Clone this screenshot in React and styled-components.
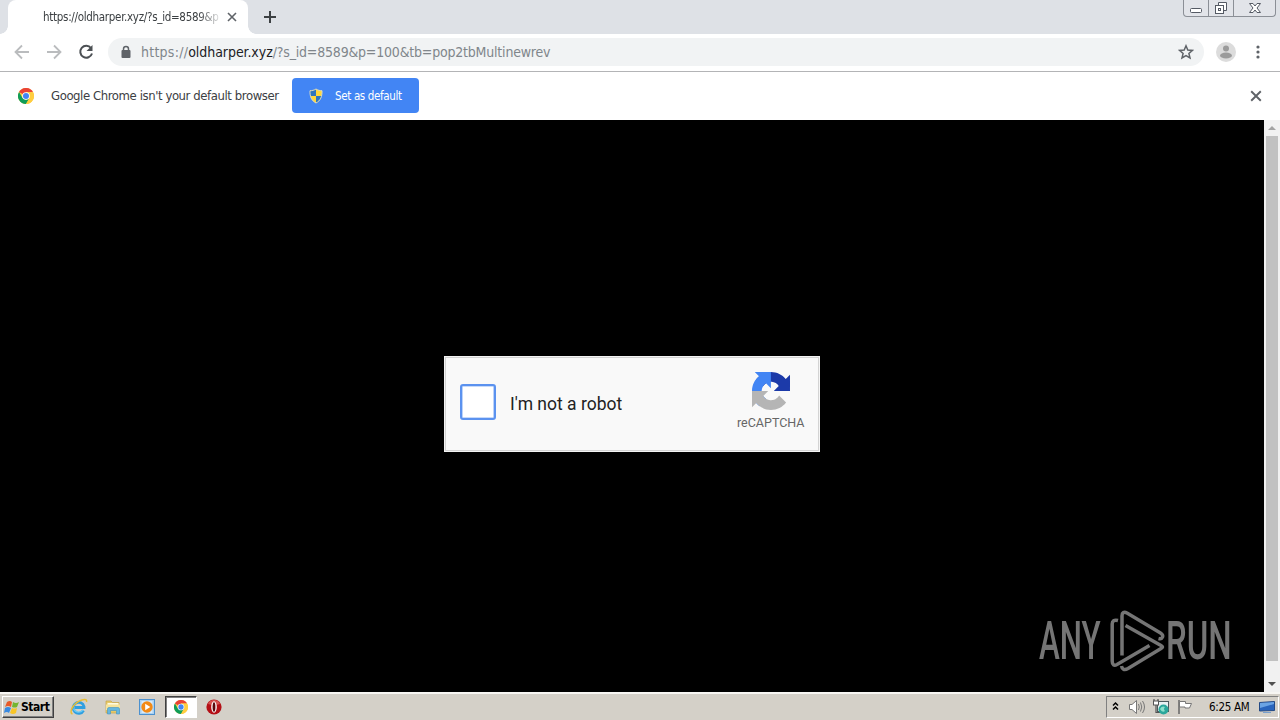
import React from 'react';
import styled, { createGlobalStyle } from 'styled-components';

const Global = createGlobalStyle`
  * { box-sizing: border-box; }
  body { margin: 0; background: #000; overflow: hidden; }
  svg { display: block; flex: none; }
`;
const ui = `"DejaVu Sans Condensed", "DejaVu Sans", Tahoma, sans-serif`;

const Screen = styled.div`
  width: 1280px; height: 720px; display: flex; flex-direction: column;
  font-family: ${ui}; background: #000; overflow: hidden;
`;
const TabStrip = styled.header`
  height: 34px; background: #dee1e6; display: flex; padding-left: 8px; flex: none;
`;
const Tab = styled.div`
  position: relative; width: 240px; height: 34px; background: #fff;
  border-radius: 8px 8px 0 0; display: flex; align-items: center; padding: 0 10px 0 35px;
  &::before, &::after {
    content: ''; position: absolute; bottom: 0; width: 8px; height: 8px;
  }
  &::before { left: -8px; background: radial-gradient(circle at 0 0, #dee1e6 7.5px, #fff 8px); }
  &::after { right: -8px; background: radial-gradient(circle at 100% 0, #dee1e6 7.5px, #fff 8px); }
`;
const Fade = styled.div`
  width: 184px; flex: none;
  mask-image: linear-gradient(90deg, #000 155px, transparent 180px);
`;
const Label = styled.span`
  display: block; white-space: pre; flex: none;
  font-size: ${p => p.$size}px; letter-spacing: ${p => p.$track || 0}px;
  color: ${p => p.$color || '#3c4043'}; line-height: 18px;
`;
const NewTab = styled.div`
  padding: 11px 0 0 16px;
`;
const WindowButtons = styled.div`
  margin-left: auto; margin-right: 4px; height: 17px; width: 93px; display: flex;
  border: 1px solid #8b8f96; border-top: 0; border-radius: 0 0 4px 4px; background: #e2e4e9;
`;
const WindowButton = styled.div`
  width: ${p => p.$w}px; display: flex; justify-content: center; padding-top: 1px;
  border-left: ${p => (p.$first ? '0' : '1px solid #8b8f96')};
`;
const Toolbar = styled.div`
  height: 38px; background: #fff; border-bottom: 1px solid #b3b4b6; flex: none;
  display: flex; align-items: center; padding: 0 13px 2px 14px;
`;
const NavIcons = styled.div`
  display: flex; gap: 16px; width: 94px;
`;
const Omnibox = styled.div`
  width: 1096px; height: 28px; border-radius: 14px; background: #f1f3f4;
  display: flex; align-items: center; padding: 0 10px 0 12px;
`;
const Scheme = styled.span`letter-spacing: .25px;`;
const Host = styled.span`color: #202124; letter-spacing: -.05px;`;
const UrlText = styled(Label)`margin-left: 9px; flex: 1;`;
const ToolbarEnd = styled.div`
  display: flex; align-items: center; gap: 14px; margin-left: 12px;
`;
const InfoBar = styled.div`
  height: 48px; background: #fff; display: flex; align-items: center; flex: none;
  padding: 0 18px 1px 18px;
`;
const InfoText = styled(Label)`width: 241px; margin-left: 17px;`;
const DefaultButton = styled.div`
  width: 127px; height: 35px; background: #4285f4; border-radius: 4px;
  display: flex; align-items: center; padding-left: 17px; gap: 12px; margin-right: auto;
`;
const Viewport = styled.main`
  height: 572px; flex: none; display: flex; background: #000;
`;
const Page = styled.div`
  position: relative; width: 1264px; display: flex; align-items: flex-start; justify-content: center;
  padding-top: 236px;
`;
const Captcha = styled.section`
  width: 376px; height: 96px; background: #f9f9f9; border: 1px solid #f4f4f4;
  box-shadow: inset 0 0 0 1px #d3d3d3; display: flex; align-items: center;
  font-family: Roboto, sans-serif; padding: 0 14.5px 0 15px;
`;
const Check = styled.div`
  width: 36px; height: 36px; border: 2px solid #5b92ef; border-radius: 3px; background: #fff;
  box-shadow: inset 0 0 0 .6px #8fb5f5; margin: -4px 14px 0 0; flex: none;
`;
const Brand = styled.div`
  margin-left: auto; display: flex; flex-direction: column; align-items: center; gap: 4px; margin-top: -5px;
`;
const Watermark = styled.div`
  position: absolute; right: 32px; top: 488px; display: flex; align-items: center; color: #757575;
`;
const Word = styled.div`
  width: ${p => p.$w}px; height: 64px;
  & > span {
    display: block; width: max-content; font: 500 54px/66px Roboto, sans-serif;
    transform: scaleX(${p => p.$scale}); transform-origin: 0 0;
  }
`;
const ScrollBar = styled.div`
  width: 16px; background: #f1f1f1; display: flex; flex-direction: column; align-items: center;
`;
const ScrollArrow = styled.div`
  height: 16px; display: flex; align-items: center;
`;
const Thumb = styled.div`
  width: 12px; height: 525px; background: #c1c1c1; margin-bottom: auto;
`;
const Taskbar = styled.footer`
  height: 28px; flex: none; background: #d4d0c8; box-shadow: inset 0 2px #f7f6f3;
  display: flex; align-items: center; padding: 2px 0 0 2px;
`;
const Start = styled.div`
  width: 52px; height: 22px; display: flex; align-items: center; gap: 1px; padding-left: 1px;
  border: 1px solid; border-color: #fff #404040 #404040 #fff; box-shadow: inset -1px -1px #808080;
  font-weight: bold;
`;
const Quick = styled.div`
  display: flex; align-items: center; margin-left: 8px;
`;
const QuickItem = styled.div`
  width: ${p => (p.$active ? 32 : 34)}px; height: 22px; display: flex; align-items: center; justify-content: center;
  ${p => p.$active && `background: #fff; margin: 0 0 0 1px; border: 1px solid; border-color: #404040 #fff #fff #404040; box-shadow: inset 1px 1px #808080;`}
`;
const Tray = styled.div`
  width: 173px; height: 22px; margin-left: auto; margin-right: 1px; display: flex; align-items: center;
  border: 1px solid; border-color: #808080 #fff #fff #808080; padding-left: 4px;
`;
const TrayIcons = styled.div`
  display: flex; align-items: center; gap: 7.5px; width: 98px;
`;
const Clock = styled(Label)`width: 50px;`;

const Cross = ({ size, color = '#5f6368', w = 1.6 }) => (
  <svg width={size} height={size} viewBox="0 0 10 10"><path d="M1 1L9 9M9 1L1 9" stroke={color} strokeWidth={w} /></svg>
);
const Chrome = ({ size }) => (
  <svg width={size} height={size} viewBox="2 2 44 44">
    <circle cx="24" cy="24" r="22" fill="#ffcd40" />
    <path d="M24 24L4.9 13A22 22 0 0 1 43.1 13H24Z" fill="#ea4335" />
    <path d="M4.9 13A22 22 0 0 0 24 46L33.5 29.5 24 34 14.5 29.5Z" fill="#0f9d58" />
    <path d="M43.1 13H24L33.5 29.5 24 46A22 22 0 0 0 43.1 13Z" fill="#ffcd40" />
    <circle cx="24" cy="24" r="10.5" fill="#fff" /><circle cx="24" cy="24" r="8.3" fill="#4285f4" />
  </svg>
);
const Shield = () => (
  <svg width="14" height="16" viewBox="0 0 14 16">
    <path d="M7 1C9 2.3 11 2.7 13 2.7C13.3 8.5 11.5 12.7 7 15C2.5 12.7.7 8.5 1 2.7C3 2.7 5 2.3 7 1Z" fill="#ffd83b" />
    <path d="M7 1C5 2.3 3 2.7 1 2.7C.9 5 1.1 6.5 1.5 8H7ZM7 8H12.5C11.7 11 10 13.4 7 15Z" fill="#2f76bd" />
    <path d="M7 1C9 2.3 11 2.7 13 2.7C13.3 8.5 11.5 12.7 7 15C2.5 12.7.7 8.5 1 2.7C3 2.7 5 2.3 7 1Z" fill="none" stroke="#d9dbc5" />
  </svg>
);
const Recaptcha = () => (
  <svg width="38" height="38" viewBox="0 0 64 64">
    <path fill="#1c3aa9" d="M64 31.955l-.033-1.37V4.687l-7.16 7.16C50.948 4.674 42.033.093 32.05.093c-10.4 0-19.622 4.96-25.458 12.64l11.736 11.86a15.55 15.55 0 0 1 4.754-5.334c2.05-1.6 4.952-2.906 8.968-2.906.485 0 .86.057 1.135.163 4.976.393 9.288 3.14 11.828 7.124l-8.307 8.307L64 31.953" />
    <path fill="#4285f4" d="M31.862.094l-1.37.033H4.594l7.16 7.16C4.58 13.147 0 22.06 0 32.046c0 10.4 4.96 19.622 12.64 25.458L24.5 45.768a15.55 15.55 0 0 1-5.334-4.754c-1.6-2.05-2.906-4.952-2.906-8.968 0-.485.057-.86.163-1.135.393-4.976 3.14-9.288 7.124-11.828l8.307 8.307L31.86.095" />
    <path fill="#b5b5b5" d="M.001 32.045l.033 1.37v25.898l7.16-7.16c5.86 7.173 14.774 11.754 24.76 11.754 10.4 0 19.622-4.96 25.458-12.64l-11.736-11.86a15.55 15.55 0 0 1-4.754 5.334c-2.05 1.6-4.952 2.906-8.968 2.906-.485 0-.86-.057-1.135-.163-4.976-.393-9.288-3.14-11.828-7.124l8.307-8.307c-10.522.04-22.4.066-27.295-.005" />
  </svg>
);
const PlayMark = () => (
  <svg width="56" height="64" viewBox="80 3 56 64" fill="none" stroke="#757575" strokeWidth="3.5">
    <path d="M88 15.5C84 14.5 82.2 16 82.2 19V56C82.2 60 84 61 87 59.5L119.5 40.5" />
    <path d="M92 50.5V11C92 7.5 94 6.5 97 8L130.5 28C134.5 30.5 132.5 34.5 128.5 33.5" />
    <path d="M95.5 20.5L131 40.5C133 41.7 133 42.3 131 43.5L98 63.5C94.5 65.5 92 64.5 91.5 61" />
  </svg>
);
const WindowsFlag = () => (
  <svg width="16" height="16">
    <path d="M3 3Q6 1 8 3L7 8Q4 6 1 8Z" fill="#e85a28" /><path d="M9 3Q12 5 15 3L13 8Q11 9 8 8Z" fill="#75b52f" />
    <path d="M1 9Q4 7 7 9L5 14Q3 12 0 14Z" fill="#398ae1" /><path d="M8 9Q10 10 13 9L12 14Q9 16 6 14Z" fill="#f8c526" />
  </svg>
);
const Explorer = () => (
  <svg width="18" height="18" viewBox="0 0 18 18" fill="none">
    <path d="M13.5 12.5A5.5 5.5 0 1 1 14 8.5V9.5H5" stroke="#2f9fe0" strokeWidth="2.8" />
    <path d="M13 12A5.5 5.5 0 0 1 3.5 10.5" stroke="#68c9f5" strokeWidth="1.3" />
    <path d="M2.5 16C-1 15 2 7 9 3.2C13 .8 17.5.5 16.5 4" stroke="#e9bd35" strokeWidth="1.5" />
  </svg>
);
const Folder = () => (
  <svg width="18" height="18" viewBox="0 0 18 18">
    <path d="M2 3H7L8.5 4.5H15V15H2Z" fill="#e7c969" stroke="#c5a44b" strokeWidth=".7" />
    <path d="M3.5 5H14.5V8H3.5Z" fill="#fffbe0" /><path d="M2 6.5H16V12H2Z" fill="#f6e39b" />
    <path d="M3.5 16V11Q3.5 9.5 5 9.5H14Q15.5 9.5 15.5 11V16H12.5V12.5H6.5V16Z" fill="#65b6df" stroke="#3f93c2" strokeWidth=".6" />
  </svg>
);
const Player = () => (
  <svg width="16" height="16" viewBox="0 0 16 16">
    <rect x=".5" y=".5" width="15" height="15" fill="#a9d1f1" stroke="#4c91cf" />
    <rect x="2.5" y="2" width="11" height="12" fill="#d7eafa" />
    <circle cx="8" cy="8" r="5.7" fill="#f28a16" /><path d="M6.2 4.7L11.3 8L6.2 11.3Z" fill="#fff" />
  </svg>
);
const Opera = () => (
  <svg width="16" height="16" viewBox="0 0 16 16">
    <circle cx="8" cy="8" r="7.6" fill="#b40f16" /><path d="M2 5A6.5 6.5 0 0 1 14 5Q8 7 2 5Z" fill="#d65250" />
    <ellipse cx="8" cy="8" rx="2.8" ry="5.8" fill="#fff" /><ellipse cx="8" cy="8" rx="1.4" ry="4.8" fill="#5c080c" />
  </svg>
);
const Chevrons = () => (
  <svg width="9" height="12" fill="none" stroke="#000" strokeWidth="1.5"><path d="M2 4.5L4.5 2L7 4.5M2 8.5L4.5 6L7 8.5" /></svg>
);
const Speaker = () => (
  <svg width="18" height="16" fill="none" stroke="#777">
    <path d="M1.5 5.5H4L8.5 1.5V14.5L4 10.5H1.5Z" fill="#fff" /><path d="M10.5 5Q12 8 10.5 11M12.5 3.5Q15 8 12.5 12.5M14.5 2Q18.5 8 14.5 14" />
  </svg>
);
const Network = () => (
  <svg width="16" height="16">
    <rect x="4.5" y="2.5" width="11" height="10" fill="#e9f1f2" stroke="#4e5a5d" />
    <path d="M1 0V3M5 0V3M3 5V13.5H8" fill="none" stroke="#555" strokeWidth="1.2" />
    <rect x=".5" y="2" width="5" height="4" fill="#fff" stroke="#555" />
    <circle cx="10.5" cy="10.5" r="5" fill="#2aa79b" /><path d="M7 10Q9 6.5 12 8Q10 10 12 12Q9 14 7 10Z" fill="#8de0cb" />
  </svg>
);
const TrayFlag = () => (
  <svg width="16" height="16"><path d="M2 1V15" stroke="#666" strokeWidth="1.5" /><path d="M2.5 2.5H8.5V4.5H14.5L12.5 9H8V8H2.5Z" fill="#fff" stroke="#777" /></svg>
);
const Desktop = () => (
  <svg width="16" height="14"><path d="M.5 2.5L15.5 1.5V10.5L.5 11Z" fill="#2965bd" stroke="#244a85" /><path d="M1 3L15 2V4L1 8Z" fill="#6ba4e4" /><path d="M4 12H12V13H4Z" fill="#79a0cd" /></svg>
);

export default function App() {
  return (
    <Screen>
      <Global />
      <TabStrip>
        <Tab>
          <Fade><Label $size={11.5} $track={-0.3}>https://oldharper.xyz/?s_id=8589&amp;p</Label></Fade>
          <Cross size={10} />
        </Tab>
        <NewTab><svg width="12" height="12"><path d="M6 0V12M0 6H12" stroke="#3c4043" strokeWidth="2" /></svg></NewTab>
        <WindowButtons>
          <WindowButton $w={24} $first><svg width="14" height="14"><rect x="1.5" y="7.5" width="11" height="4" rx="1" fill="#fff" stroke="#555a64" /></svg></WindowButton>
          <WindowButton $w={25}><svg width="14" height="14" fill="#fff" stroke="#555a64"><path d="M4.5 1.5H12.5V9.5H9.5V4.5H4.5Z" /><rect x="1.5" y="4.5" width="8" height="8" /><rect x="4.5" y="7.5" width="2" height="2" /></svg></WindowButton>
          <WindowButton $w={42}><svg width="14" height="14"><path d="M1.5 2.5H5L7 5L9 2.5H12.5L9 7L12.5 11.5H9L7 9L5 11.5H1.5L5 7Z" fill="#fff" stroke="#555a64" /></svg></WindowButton>
        </WindowButtons>
      </TabStrip>
      <Toolbar>
        <NavIcons>
          <svg width="16" height="16" fill="none" stroke="#babcbe" strokeWidth="1.8"><path d="M15 8H2M8 1.5L1.5 8L8 14.5" /></svg>
          <svg width="16" height="16" fill="none" stroke="#babcbe" strokeWidth="1.8"><path d="M1 8H14M8 1.5L14.5 8L8 14.5" /></svg>
          <svg width="16" height="16" fill="none" stroke="#4c5054" strokeWidth="2"><path d="M13 4A6 6 0 1 0 14 9.5" /><path d="M14.5 1V7H8.5Z" fill="#4c5054" stroke="none" /></svg>
        </NavIcons>
        <Omnibox>
          <svg width="12" height="14"><path d="M3.5 6V4A2.5 2.5 0 0 1 8.5 4V6" fill="none" stroke="#5f6368" strokeWidth="1.5" /><rect x="1.5" y="5" width="9" height="8" rx="1" fill="#5f6368" /></svg>
          <UrlText $size={14} $track={-0.2} $color="#80868b"><Scheme>https://</Scheme><Host>oldharper.xyz</Host>/?s_id=8589&amp;p=100&amp;tb=pop2tbMultinewrev</UrlText>
          <svg width="16" height="16"><path d="M8 1.8L9.8 6L14.3 6.4L10.9 9.4L12 13.9L8 11.5L4 13.9L5.1 9.4L1.7 6.4L6.2 6Z" fill="none" stroke="#5f6368" strokeWidth="1.5" /></svg>
        </Omnibox>
        <ToolbarEnd>
          <svg width="20" height="20"><circle cx="10" cy="10" r="10" fill="#dcdcdc" /><circle cx="10" cy="6.5" r="3" fill="#9b9b9b" /><ellipse cx="10" cy="13.5" rx="6" ry="3" fill="#9b9b9b" /></svg>
          <svg width="16" height="16" fill="#5f6368"><circle cx="8" cy="3" r="1.6" /><circle cx="8" cy="8" r="1.6" /><circle cx="8" cy="13" r="1.6" /></svg>
        </ToolbarEnd>
      </Toolbar>
      <InfoBar>
        <Chrome size={16} />
        <InfoText $size={13} $track={-0.42}>Google Chrome isn't your default browser</InfoText>
        <DefaultButton><Shield /><Label $size={11.5} $track={-0.35} $color="#fff">Set as default</Label></DefaultButton>
        <Cross size={12} />
      </InfoBar>
      <Viewport>
        <Page>
          <Captcha>
            <Check />
            <Label $size={17.5} $color="#222">I'm not a robot</Label>
            <Brand><Recaptcha /><Label $size={12.5} $color="#666">reCAPTCHA</Label></Brand>
          </Captcha>
          <Watermark>
            <Word $w={71} $scale={0.58}><span>ANY</span></Word>
            <PlayMark />
            <Word $w={66.5} $scale={0.61}><span>RUN</span></Word>
          </Watermark>
        </Page>
        <ScrollBar>
          <ScrollArrow><svg width="8" height="4"><path d="M0 4L4 0L8 4Z" fill="#a3a3a3" /></svg></ScrollArrow>
          <Thumb />
          <ScrollArrow><svg width="8" height="4"><path d="M0 0L4 4L8 0Z" fill="#505050" /></svg></ScrollArrow>
        </ScrollBar>
      </Viewport>
      <Taskbar>
        <Start><WindowsFlag /><Label $size={12} $track={-0.45} $color="#000">Start</Label></Start>
        <Quick>
          <QuickItem><Explorer /></QuickItem>
          <QuickItem><Folder /></QuickItem>
          <QuickItem><Player /></QuickItem>
          <QuickItem $active><Chrome size={14} /></QuickItem>
          <QuickItem><Opera /></QuickItem>
        </Quick>
        <Tray>
          <TrayIcons><Chevrons /><Speaker /><Network /><TrayFlag /></TrayIcons>
          <Clock $size={11.5} $track={-0.3} $color="#000">6:25 AM</Clock>
          <Desktop />
        </Tray>
      </Taskbar>
    </Screen>
  );
}
